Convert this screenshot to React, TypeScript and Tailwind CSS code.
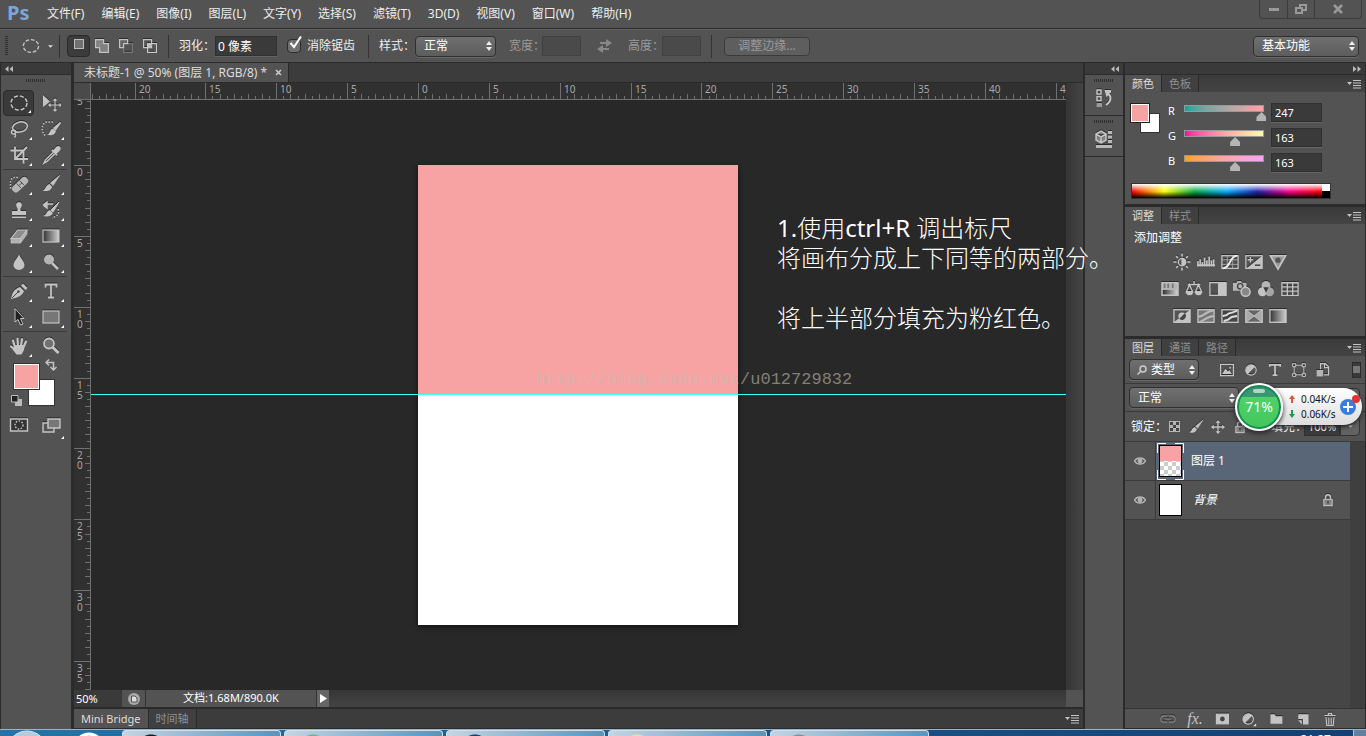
import type { ReactNode } from 'react'

const MENUS = [
  '文件(F)',
  '编辑(E)',
  '图像(I)',
  '图层(L)',
  '文字(Y)',
  '选择(S)',
  '滤镜(T)',
  '3D(D)',
  '视图(V)',
  '窗口(W)',
  '帮助(H)',
]

// Ruler spacing at 50% zoom: half a centimetre per small tick.
const TICK = 7.087
const H_ORIGIN = 327
const V_ORIGIN = 65

interface IconProps {
  children: ReactNode
  size?: string
}

function Icon({ children, size = 'size-5' }: IconProps) {
  return (
    <svg
      className={`${size} shrink-0 drop-shadow-[0_-1px_0_#2c2c2c]`}
      viewBox="0 0 20 20"
      fill="none"
      stroke="#c4c4c4"
      strokeWidth="1.5"
      aria-hidden="true"
    >
      {children}
    </svg>
  )
}

const BRUSH = (
  <>
    <path d="M18.500 1.500 L9.500 9 L12 11.500 Z" fill="#c4c4c4" strokeWidth="0.800" />
    <path d="M8.500 10 L11 12.500 C10.500 16.500 6 18 1.500 16.500 C5 15.500 4.500 11 8.500 10 Z" fill="#c4c4c4" stroke="none" />
  </>
)

const MOVE_CROSS = (
  <path
    d="M10 0 L13.500 4 H11 V9 H16 V6.500 L20 10 L16 13.500 V11 H11 V16 H13.500 L10 20 L6.500 16 H9 V11 H4 V13.500 L0 10 L4 6.500 V9 H9 V4 H6.500 Z"
    fill="#c4c4c4"
    stroke="none"
  />
)

const LOCK = (
  <>
    <path d="M6.500 9 V6 A3.500 3.500 0 0 1 13.500 6 V9" strokeWidth="2" />
    <rect x="4" y="9" width="12" height="9" fill="#858585" strokeWidth="1.500" />
    <path d="M10 11.500 V15" stroke="#3a3a3a" strokeWidth="2" />
  </>
)

interface Tool {
  name: string
  art: ReactNode
  single?: boolean
}

const TOOL_GROUPS: Tool[][] = [
  [
    { name: '椭圆选框工具', art: <ellipse cx="10" cy="10" rx="8" ry="7" strokeDasharray="4 2" /> },
    {
      name: '移动工具',
      single: true,
      art: (
        <>
          <path d="M2 2 V14 L9 8.500 Z" fill="#c4c4c4" stroke="none" />
          <path d="M14 6 V18 M8 12 H20 M12.500 7.500 L14 6 L15.500 7.500 M12.500 16.500 L14 18 L15.500 16.500 M9.500 10.500 L8 12 L9.500 13.500 M18.500 10.500 L20 12 L18.500 13.500" strokeWidth="1.200" />
        </>
      ),
    },
    {
      name: '套索工具',
      art: (
        <>
          <ellipse cx="11" cy="8" rx="7.500" ry="5" transform="rotate(-14 11 8)" />
          <circle cx="4.500" cy="13" r="2" />
          <path d="M5 15 C7 15 7 17 5.500 18.500" />
        </>
      ),
    },
    {
      name: '快速选择工具',
      art: (
        <>
          <path d="M12 3 H5 C0 5 0 14 5 17" strokeDasharray="1.500 1.500" />
          <path d="M19.500 3.500 L13 9 L14.500 10.500 Z" fill="#c4c4c4" />
          <path d="M12 9.500 L15 12 C14 16 10 17 6 15.500 C9 15 8.500 10.500 12 9.500 Z" fill="#c4c4c4" stroke="none" />
        </>
      ),
    },
    { name: '裁剪工具', art: <path d="M6 1.500 V14 H19 M1.500 5.500 H14.500 V18.500 M7 13 L18 2" strokeWidth="1.800" /> },
    {
      name: '吸管工具',
      art: (
        <>
          <path d="M12 7.500 L4.500 15 L3 18 L6 16.500 L13.500 9" />
          <path d="M11 5 L16 10 M12.500 6.500 L16 2.500 C18 1 19.500 3 18 5 L14.500 8.500 Z" fill="#c4c4c4" strokeWidth="2" />
        </>
      ),
    },
  ],
  [
    {
      name: '污点修复画笔工具',
      art: (
        <>
          <path d="M9 3.500 C3 2 1 6 1.500 11 V16" strokeDasharray="1.500 1.500" />
          <rect x="1.500" y="7" width="19" height="7.500" rx="3.500" fill="#b5b5b5" stroke="none" transform="rotate(-43 11 10.500)" />
          <path d="M7.500 9.500 L12 14 M10.500 6.500 L15 11" stroke="#555" strokeWidth="1" />
          <path d="M10.500 10.500 H11.500 M12 9 H13" stroke="#444" />
        </>
      ),
    },
    { name: '画笔工具', art: BRUSH },
    {
      name: '仿制图章工具',
      art: (
        <path
          d="M10 2 A3 3 0 0 1 12.500 6.500 C11 9 11 10 12 11 H17 V15 H3 V11 H8 C9 10 9 9 7.500 6.500 A3 3 0 0 1 10 2 Z M3 16.500 H17 V18 H3 Z"
          fill="#c4c4c4"
          stroke="none"
        />
      ),
    },
    {
      name: '历史记录画笔工具',
      art: (
        <>
          <path d="M2 5 L6 2 V4 H12 M6 4 V8 L2 5" fill="#c4c4c4" />
          <path d="M18 2 L10 10 L12 12 Z" fill="#c4c4c4" strokeWidth="1" />
          <path d="M9 10 L12 13 C10 16.500 6 17 2 16 C6 15 5 11 9 10 Z" fill="#c4c4c4" stroke="none" />
          <path d="M17 9 C19 13 16 17 11 17.500" strokeDasharray="1.500 1.500" />
        </>
      ),
    },
    {
      name: '橡皮擦工具',
      art: (
        <>
          <path d="M8.500 4 H18 L11.500 12.500 H2 Z" fill="#8d8d8d" strokeWidth="1.200" />
          <path d="M2 12.500 H11.500 V17 H2 Z M11.500 12.500 L18 4 V8 L11.500 17 Z" fill="#b0b0b0" strokeWidth="0.800" />
        </>
      ),
    },
    {
      name: '渐变工具',
      art: (
        <>
          <defs>
            <linearGradient id="tool-gradient">
              <stop stopColor="#333" />
              <stop offset="1" stopColor="#d0d0d0" />
            </linearGradient>
          </defs>
          <rect x="2" y="4" width="16" height="12" fill="url(#tool-gradient)" strokeWidth="1.200" />
        </>
      ),
    },
    { name: '模糊工具', art: <path d="M10 2 C11 6 15.500 9 15.500 13 A5.500 5 0 0 1 4.500 13 C4.500 9 9 6 10 2 Z" fill="#c4c4c4" stroke="none" /> },
    {
      name: '减淡工具',
      art: (
        <>
          <circle cx="8" cy="7.500" r="5" fill="#b5b5b5" stroke="none" />
          <path d="M11 11 L17 17" strokeWidth="2.500" />
        </>
      ),
    },
  ],
  [
    {
      name: '钢笔工具',
      art: (
        <>
          <path d="M2 18 C3 12 5 8 11 6 L15 10 C13 15 8 17 2 18 Z" fill="#c4c4c4" stroke="none" />
          <path d="M12 4.500 L14 2.500 L18.500 7 L16.500 9 Z" fill="#c4c4c4" stroke="none" />
          <path d="M3 17 L9 11" stroke="#444" strokeWidth="1" />
          <circle cx="9.500" cy="10.500" r="1.200" fill="#444" stroke="none" />
        </>
      ),
    },
    { name: '横排文字工具', art: <path d="M4.500 6.500 V3.500 H15.500 V6.500 M10 3.500 V16.500 M7 16.500 H13" strokeWidth="1.800" /> },
    {
      name: '路径选择工具',
      art: <path d="M6 1.500 V15 L9 12.500 L11.500 18 L14 17 L11.500 11.500 H15 Z" fill="#222" strokeWidth="1" />,
    },
    { name: '矩形工具', art: <rect x="2" y="4" width="16" height="12" fill="#777" strokeWidth="1.200" /> },
  ],
  [
    {
      name: '抓手工具',
      art: (
        <>
          <path d="M6 11 L4 4.500 M9 10 L8.500 2.500 M12 10 L13 3 M14.500 11 L17 5.500 M6 14 L2 10.500" strokeWidth="2.200" strokeLinecap="round" />
          <path d="M5 9 H15.500 L15 14 L12.500 18.500 H7.500 L4 14 Z" fill="#c4c4c4" stroke="none" />
        </>
      ),
    },
    {
      name: '缩放工具',
      single: true,
      art: (
        <>
          <circle cx="8" cy="7.500" r="5" fill="#707070" strokeWidth="1.800" />
          <path d="M11.500 11 L17.500 17" strokeWidth="3" />
        </>
      ),
    },
  ],
]

const ADJUSTMENTS: { name: string; art: ReactNode }[][] = [
  [
    {
      name: '亮度/对比度',
      art: (
        <>
          <circle cx="10" cy="10" r="4" />
          <path d="M10 6 A4 4 0 0 1 10 14 Z" fill="#c4c4c4" />
          <path d="M10 0.500 V4 M10 16 V19.500 M0.500 10 H4 M16 10 H19.500 M3.500 3.500 L5.500 5.500 M14.500 14.500 L16.500 16.500 M3.500 16.500 L5.500 14.500 M14.500 5.500 L16.500 3.500" strokeWidth="1.800" />
        </>
      ),
    },
    { name: '色阶', art: <path d="M1 15 V9 M3.500 15 V7 M6 15 V10 M8.500 15 V5 M11 15 V8 M13.500 15 V4 M16 15 V8 M18.500 15 V7 M0 13.500 H20" strokeWidth="1.800" /> },
    {
      name: '曲线',
      art: (
        <>
          <rect x="1" y="3" width="18" height="14" />
          <path d="M7 3 V17 M13 3 V17 M1 7.500 H19 M1 12.500 H19" strokeWidth="0.800" />
          <path d="M2 17 C12 16 8 4 18 3" stroke="#eee" strokeWidth="2" />
        </>
      ),
    },
    {
      name: '曝光度',
      art: (
        <>
          <rect x="1" y="3" width="18" height="14" />
          <path d="M19 3 V17 H2 Z" fill="#c4c4c4" stroke="none" />
          <path d="M3 7.500 H9 M6 4.500 V10.500" />
          <path d="M11 13.500 H17" stroke="#333" />
        </>
      ),
    },
    {
      name: '自然饱和度',
      art: (
        <>
          <path d="M1.500 3 H18.500 L10 18 Z" fill="#999" strokeWidth="1.800" />
          <circle cx="10" cy="8" r="3" fill="#555" stroke="none" />
        </>
      ),
    },
  ],
  [
    {
      name: '色相/饱和度',
      art: (
        <>
          <rect x="1" y="3" width="18" height="14" fill="#b5b5b5" />
          <path d="M4 4 V9 M8 4 V9 M13 4 V9" stroke="#777" strokeWidth="2" />
          <rect x="2" y="11" width="16" height="5" fill="url(#tool-gradient)" stroke="none" />
        </>
      ),
    },
    {
      name: '色彩平衡',
      art: (
        <>
          <path d="M10 1 V5 M3 5 H17 M5 5 L1.500 13 H8.500 Z M15 5 L11.500 13 H18.500 Z" />
          <path d="M1 13 H9 A4 4 0 0 1 1 13 M11 13 H19 A4 4 0 0 1 11 13" fill="#c4c4c4" stroke="none" />
        </>
      ),
    },
    {
      name: '黑白',
      art: (
        <>
          <rect x="1" y="3" width="18" height="14" />
          <rect x="10" y="3" width="9" height="14" fill="#c4c4c4" stroke="none" />
        </>
      ),
    },
    {
      name: '照片滤镜',
      art: (
        <>
          <path d="M0 3 H4 L5 1 H9 L10 3 H15 V12 H0 Z" fill="#b5b5b5" stroke="none" />
          <circle cx="8" cy="7" r="3" stroke="#444" />
          <circle cx="14" cy="13" r="5" fill="#888" strokeWidth="1.800" />
        </>
      ),
    },
    {
      name: '通道混合器',
      art: (
        <>
          <circle cx="10" cy="6" r="5" fill="#b5b5b5" stroke="none" />
          <circle cx="6" cy="13" r="5" fill="#c4c4c4" stroke="none" />
          <circle cx="14" cy="13" r="5" fill="#a5a5a5" stroke="none" />
          <path d="M7 8 H13 L10 14 Z" fill="#3a3a3a" stroke="none" />
        </>
      ),
    },
    { name: '颜色查找', art: <path d="M1 3 H19 V17 H1 Z M7 3 V17 M13 3 V17 M1 7.700 H19 M1 12.300 H19" /> },
  ],
  [
    {
      name: '反相',
      art: (
        <>
          <rect x="1" y="3" width="18" height="14" fill="#555" />
          <path d="M19 3 V17 H1 Z" fill="#c4c4c4" stroke="none" />
          <circle cx="10" cy="10" r="4" fill="#c4c4c4" stroke="none" />
          <path d="M13 7 A4.200 4.200 0 0 1 7 13 Z" fill="#444" stroke="none" />
        </>
      ),
    },
    {
      name: '色调分离',
      art: (
        <>
          <rect x="1" y="3" width="18" height="14" fill="#777" />
          <path d="M1 11 C8 11 10 4 18 4 M3 17 C9 14 12 10 19 10" stroke="#b8b8b8" strokeWidth="2.500" />
        </>
      ),
    },
    {
      name: '阈值',
      art: (
        <>
          <rect x="1" y="3" width="18" height="14" fill="#444" />
          <path d="M2 10 L6 9 L9 7 L13 6 L18 4 M3 15.500 L8 14 L12 11 L18 10" stroke="#ddd" strokeWidth="2.200" />
        </>
      ),
    },
    {
      name: '可选颜色',
      art: (
        <>
          <rect x="1" y="3" width="18" height="14" fill="#666" />
          <path d="M1 3 L10 10 L1 17 Z M19 3 L10 10 L19 17 Z" fill="#aaa" strokeWidth="1" />
        </>
      ),
    },
    {
      name: '渐变映射',
      art: <rect x="1" y="3" width="18" height="14" fill="url(#tool-gradient)" />,
    },
  ],
]

function Grip() {
  return (
    <div className="mx-auto h-[3px] w-5 shrink-0 bg-[repeating-linear-gradient(90deg,#2e2e2e_0_1px,transparent_1px_2px)]" />
  )
}

function Divider() {
  return <div className="h-[23px] w-px shrink-0 bg-[#333]" />
}

function DropDown({ label, value, className, padding = 'pl-2' }: { label: string; value: string; className: string; padding?: string }) {
  return (
    <div className={`relative shrink-0 ${className}`}>
      <select
        aria-label={label}
        className={`h-full w-full appearance-none rounded-sm border border-[#303030] bg-linear-to-b from-[#707070] to-[#5c5c5c] text-xs leading-4 text-white shadow-[0_1px_0_#686868] ${padding}`}
      >
        <option>{value}</option>
      </select>
      <svg className="pointer-events-none absolute top-1/2 right-1 h-2.5 w-1.5 -translate-y-1/2" viewBox="0 0 6 10" fill="#eee" aria-hidden="true">
        <path d="M0 4 L3 0 L6 4 Z M0 6 L3 10 L6 6 Z" />
      </svg>
    </div>
  )
}

function Tab({ children, active = false }: { children: ReactNode; active?: boolean }) {
  return (
    <button
      role="tab"
      aria-selected={active}
      className={
        active
          ? 'border-r border-[#2a2a2a] bg-[#535353] px-[7px] text-[#ddd]'
          : 'border-r border-[#2a2a2a] bg-[#404040] px-[7px] text-[#8f8f8f]'
      }
    >
      {children}
    </button>
  )
}

function PanelMenu() {
  return (
    <button aria-label="面板菜单" className="mr-1 ml-auto">
      <svg className="h-2.5 w-3.5" viewBox="0 0 14 10" fill="#c4c4c4" aria-hidden="true">
        <path d="M0 3 H5 L2.500 6 Z M6 1 H14 V2 H6 Z M6 3.500 H14 V4.500 H6 Z M6 6 H14 V7 H6 Z M6 8.500 H14 V9.500 H6 Z" />
      </svg>
    </button>
  )
}

function PanelTabs({ tabs }: { tabs: string[] }) {
  return (
    <div role="tablist" className="flex h-[17px] shrink-0 bg-linear-to-b from-[#3a3a3a] to-[#444] text-[11px] leading-[17px]">
      {tabs.map((t, i) => (
        <Tab key={t} active={i === 0}>
          {t}
        </Tab>
      ))}
      <PanelMenu />
    </div>
  )
}

function Collapse({ flip = false }: { flip?: boolean }) {
  return (
    <svg className={flip ? 'h-1.5 w-2 rotate-180' : 'h-1.5 w-2'} viewBox="0 0 8 6" fill="#bbb" aria-hidden="true">
      <path d="M3.500 0 V6 L0 3 Z M8 0 V6 L4.500 3 Z" />
    </svg>
  )
}

function MenuBar() {
  return (
    <header className="flex h-[29px] shrink-0 items-start border-b border-[#2b2b2b] bg-[#535353]">
      <span className="w-[39px] shrink-0 pl-[7px] text-xl leading-[26px] font-bold text-[#7aa7d8]">Ps</span>
      <nav className="flex gap-px text-xs leading-7 text-[#eee]">
        {MENUS.map((m) => (
          <button key={m} className="px-2 whitespace-nowrap">
            {m}
          </button>
        ))}
      </nav>
      <div className="mr-1 ml-auto flex h-[19px] rounded-b-sm border border-t-0 border-[#3b3b3b]">
        <button aria-label="最小化" className="grid w-[27px] place-items-center">
          <span className="h-[3px] w-2.5 bg-[#999]" />
        </button>
        <button aria-label="还原" className="grid w-7 place-items-center border-x border-[#3b3b3b]">
          <svg className="h-2.5 w-3" viewBox="0 0 12 10" fill="none" stroke="#999" strokeWidth="2" aria-hidden="true">
            <path d="M5 4 V1 H11 V6 H8 M1 4 H7 V9 H1 Z" />
          </svg>
        </button>
        <button aria-label="关闭" className="grid w-[46px] place-items-center">
          <svg className="h-2.5 w-2.5" viewBox="0 0 10 10" stroke="#999" strokeWidth="2.500" aria-hidden="true">
            <path d="M1 1 L9 9 M9 1 L1 9" />
          </svg>
        </button>
      </div>
    </header>
  )
}

function OptionsBar() {
  return (
    <div className="flex h-[34px] shrink-0 items-center border-t border-b border-t-[#606060] border-b-[#2b2b2b] bg-[#535353] pl-[5px] text-xs leading-4 text-[#eee]">
      <div className="h-5 w-[3px] bg-[repeating-linear-gradient(#2e2e2e_0_1px,transparent_1px_2px)]" />
      <button aria-label="工具预设" className="mr-1.5 ml-3.5 flex items-center gap-2">
        <svg className="size-[18px]" viewBox="0 0 20 20" fill="none" stroke="#c4c4c4" strokeWidth="1.500" aria-hidden="true">
          <ellipse cx="10" cy="10" rx="8.500" ry="7" strokeDasharray="4 2" />
        </svg>
        <svg className="h-[3px] w-[5px]" viewBox="0 0 6 3" fill="#ddd" aria-hidden="true">
          <path d="M0 0 H6 L3 3 Z" />
        </svg>
      </button>
      <Divider />
      <div className="mr-1.5 ml-[7px] flex items-center">
        <button aria-label="新选区" className="grid h-[22px] w-[23px] place-items-center rounded-sm border border-[#2a2a2a] bg-[#3c3c3c]">
          <span className="mb-1 size-2.5 border border-[#bbb] bg-[#707070]" />
        </button>
        <button aria-label="添加到选区" className="grid w-6 place-items-center">
          <Icon size="size-4"><path d="M2 2 H12 V7 H18 V18 H7 V12 H2 Z" fill="#808080" /><path d="M7 12 V7 H12" stroke="#999" strokeWidth="1" /></Icon>
        </button>
        <button aria-label="从选区减去" className="grid w-6 place-items-center">
          <Icon size="size-4"><path d="M12 7 H18 V18 H7 V12" stroke="#777" /><path d="M2 2 H12 V7 H7 V12 H2 Z" fill="#666" /></Icon>
        </button>
        <button aria-label="与选区交叉" className="grid w-6 place-items-center">
          <Icon size="size-4"><path d="M2 2 H12 V12 H2 Z M7 7 H18 V18 H7 Z" /><path d="M8 8 H11.500 V11.500 H8 Z" fill="#aaa" /></Icon>
        </button>
      </div>
      <Divider />
      <label className="mr-2.5 ml-2.5 flex items-center gap-1 whitespace-nowrap">
        <span className="w-8">羽化：</span>
        <input className="h-5 w-[62px] border border-[#303030] bg-[#3a3a3a] pl-0.5 text-white shadow-[0_1px_0_#646464]" defaultValue="0 像素" />
      </label>
      <label className="mr-[13px] flex items-center gap-1.5 whitespace-nowrap">
        <span className="relative size-[14px]">
          <input type="checkbox" defaultChecked className="block size-[14px] appearance-none rounded-sm border border-[#2c2c2c] bg-[#707070]" />
          <svg className="pointer-events-none absolute -top-1 left-0.5 size-[14px]" viewBox="0 0 14 14" fill="none" stroke="#fff" strokeWidth="2" aria-hidden="true">
            <path d="M1.500 8 L5 12 L12 1.500" />
          </svg>
        </span>
        消除锯齿
      </label>
      <Divider />
      <span className="ml-2.5 w-9 whitespace-nowrap">样式：</span>
      <DropDown label="样式" value="正常" className="h-[21px] w-[81px]" />
      <label className="ml-[13px] flex items-center whitespace-nowrap text-[#999]">
        <span className="w-[33px]">宽度：</span>
        <input disabled className="h-5 w-[39px] border border-[#404040] bg-[#4a4a4a]" />
      </label>
      <button aria-label="交换宽高" className="mx-4">
        <svg className="h-3.5 w-[15px]" viewBox="0 0 15 14" fill="#888" aria-hidden="true">
          <path d="M3 3 H9 V0 L15 4 L9 8 V5 H3 Z M12 9 H6 V6 L0 10 L6 14 V11 H12 Z" />
        </svg>
      </button>
      <label className="mr-2.5 flex items-center whitespace-nowrap text-[#999]">
        <span className="w-[34px]">高度：</span>
        <input disabled className="h-5 w-[39px] border border-[#404040] bg-[#4a4a4a]" />
      </label>
      <Divider />
      <button className="ml-3 h-[19px] w-[86px] rounded-sm border border-[#3b3b3b] bg-[#5e5e5e] text-[#999]">调整边缘...</button>
      <DropDown label="工作区" value="基本功能" className="mr-[7px] ml-auto h-[21px] w-[106px]" />
    </div>
  )
}

function ToolBox() {
  return (
    <aside className="flex w-[72px] shrink-0 flex-col border-x border-[#2b2b2b] bg-[#535353]">
      <div className="flex h-3 shrink-0 items-center border-b border-[#2b2b2b] bg-[#3a3a3a] pl-1">
        <Collapse />
      </div>
      <div className="flex flex-col pt-1">
        <Grip />
        <div className="h-2" />
        {TOOL_GROUPS.map((group, g) => (
          <div key={g} className={g ? 'mr-1 ml-0.5 grid grid-cols-2 border-t border-[#3a3a3a] py-px' : 'mr-1 ml-0.5 grid grid-cols-2 pb-px'}>
            {group.map((tool, i) => (
              <button
                key={tool.name}
                aria-label={tool.name}
                className={
                  g === 0 && i === 0
                    ? 'relative grid h-[26px] w-[31px] place-items-center rounded-sm border border-[#2b2b2b] bg-[#3a3a3a]'
                    : 'relative grid h-[26px] w-[31px] place-items-center'
                }
              >
                <Icon>{tool.art}</Icon>
                {!tool.single && (
                  <span className="absolute right-0.5 bottom-0.5 size-[3px] bg-white [clip-path:polygon(100%_0,100%_100%,0_100%)]" />
                )}
              </button>
            ))}
          </div>
        ))}
        {/* Foreground and background colour. */}
        <div className="relative mt-[3px] mb-1.5 ml-3 h-11 w-11">
          <button aria-label="背景色" className="absolute top-4 left-[15px] size-[27px] border border-[#333] bg-white" />
          <button aria-label="前景色" className="absolute top-0 left-0 size-[27px] border border-[#333] bg-[#f7a3a3] ring-1 ring-white ring-inset" />
          <svg className="absolute -top-1 left-8 size-3" viewBox="0 0 12 12" fill="none" stroke="#c4c4c4" strokeWidth="1.500" aria-hidden="true">
            <path d="M4 0.500 L1 3.500 L4 6.500 M1.500 3.500 H8.500 V10 M5.500 8 L8.500 11 L11.500 8" />
          </svg>
          <svg className="absolute top-8 -left-0.5 size-[11px]" viewBox="0 0 11 11" aria-hidden="true">
            <path d="M4 4 H11 V11 H4 Z" fill="#bbb" />
            <path d="M0.500 0.500 H7 V7 H0.500 Z" fill="#222" stroke="#bbb" />
          </svg>
        </div>
        <div className="mr-1 ml-0.5 grid grid-cols-2">
          <button aria-label="快速蒙版" className="grid h-6 w-[31px] place-items-center">
            <Icon>
              <rect x="1.500" y="4" width="17" height="12" fill="#333" />
              <circle cx="10" cy="10" r="4" strokeDasharray="1.500 1.500" />
            </Icon>
          </button>
          <button aria-label="屏幕模式" className="relative grid h-6 w-[31px] place-items-center">
            <Icon>
              <rect x="2" y="8" width="11" height="9" fill="#555" />
              <rect x="7" y="4" width="12" height="9" fill="#777" />
            </Icon>
            <span className="absolute right-0.5 -bottom-0.5 size-[3px] bg-white [clip-path:polygon(100%_0,100%_100%,0_100%)]" />
          </button>
        </div>
      </div>
    </aside>
  )
}

function HorizontalRuler() {
  const ticks = Array.from({ length: 140 }, (_, i) => i - 46)
  return (
    <svg className="h-[17px] w-full bg-[#303030] text-[10px]" fill="#a8a8a8" aria-hidden="true">
      <path
        d={ticks.map((t) => `M${Math.round(H_ORIGIN + t * TICK) + 0.5} ${t % 10 === 0 ? 0 : t % 2 === 0 ? 11 : 13} V17`).join(' ')}
        stroke="#707070"
      />
      <path d="M0 16.500 H4000" stroke="#707070" />
      {[-20, -15, -10, -5, 0, 5, 10, 15, 20, 25, 30, 35, 40, 45].map((n) => (
        <text key={n} x={Math.round(H_ORIGIN + n * 2 * TICK) + 4} y="10">
          {Math.abs(n)}
        </text>
      ))}
    </svg>
  )
}

function VerticalRuler() {
  const ticks = Array.from({ length: 90 }, (_, i) => i - 12)
  return (
    <svg className="h-full w-[17px] bg-[#303030] text-[10px]" fill="#a8a8a8" aria-hidden="true">
      <path
        d={ticks.map((t) => `M${t % 10 === 0 ? 0 : t % 2 === 0 ? 11 : 13} ${Math.round(V_ORIGIN + t * TICK) + 0.5} H17`).join(' ')}
        stroke="#707070"
      />
      <path d="M16.500 0 V4000" stroke="#707070" />
      {[-5, 0, 5, 10, 15, 20, 25, 30, 35].map((n) =>
        String(Math.abs(n))
          .split('')
          .map((digit, i) => (
            <text key={`${n}-${i}`} x="3" y={Math.round(V_ORIGIN + n * 2 * TICK) + 11 + i * 10}>
              {digit}
            </text>
          )),
      )}
    </svg>
  )
}

function DocumentWindow() {
  return (
    <main className="flex min-w-0 flex-1 flex-col">
      <div role="tablist" className="flex h-5 shrink-0 border-b border-[#2b2b2b] bg-[#3c3c3c]">
        <div className="flex items-center gap-2 border-r border-[#2b2b2b] bg-[#535353] pr-1.5 pl-2.5 text-xs leading-[19px] text-[#ddd]">
          <button role="tab" aria-selected="true" className="whitespace-nowrap">
            未标题-1 @ 50% (图层 1, RGB/8) *
          </button>
          <button aria-label="关闭文档">
            <svg className="size-[7px]" viewBox="0 0 7 7" stroke="#ccc" strokeWidth="1.500" aria-hidden="true">
              <path d="M1 1 L6 6 M6 1 L1 6" />
            </svg>
          </button>
        </div>
      </div>
      <div className="grid min-h-0 flex-1 grid-cols-[17px_1fr_17px] grid-rows-[17px_1fr]">
        <div className="border-r border-b border-[#707070] bg-[#4a4a4a]" />
        <HorizontalRuler />
        <div className="row-span-2 bg-linear-to-r from-[#353535] to-[#454545]" />
        <VerticalRuler />
        <div className="relative z-10 bg-[#282828]">
          <div className="absolute top-[65px] left-[327px] h-[460px] w-80 bg-white shadow-[0_2px_5px_#111]">
            <div className="h-1/2 bg-[#f7a3a3]" />
          </div>
          <div className="absolute inset-x-0 top-[294px] h-px bg-[#4ff]" />
          <span className="absolute top-[268px] left-[445px] text-[17px] leading-6 text-[#c0bfb0]/60 [font-family:'Liberation_Mono',monospace]">
            http://blog.csdn.net/u012729832
          </span>
          <p className="absolute top-[113px] left-[686px] text-2xl leading-[30px] font-light whitespace-pre text-white">
            <span className="font-normal">1.</span>使用<span className="font-normal">ctrl+R </span>
            {'调出标尺\n将画布分成上下同等的两部分。\n\n将上半部分填充为粉红色。'}
          </p>
        </div>
      </div>
      <div className="flex h-[17px] shrink-0 bg-linear-to-b from-[#363636] to-[#444] text-[11px] leading-4 text-white">
        <input aria-label="缩放" className="w-12 bg-[#3a3a3a] pl-0.5" defaultValue="50%" />
        <button aria-label="导出" className="grid w-6 place-items-center border-r border-[#333] bg-[#535353]">
          <svg className="size-3" viewBox="0 0 12 12" aria-hidden="true">
            <circle cx="6" cy="6" r="6" fill="#aaa" />
            <path d="M3.500 3 H7 L9 5 V9 H3.500 Z" fill="#ddd" stroke="#555" />
          </svg>
        </button>
        <div className="w-[171px] border-r border-[#333] bg-[#535353] text-center">文档:1.68M/890.0K</div>
        <button aria-label="状态栏选项" className="grid w-3 place-items-center bg-[#666]">
          <svg className="h-[9px] w-[7px]" viewBox="0 0 7 9" fill="#fff" aria-hidden="true">
            <path d="M0 0 L7 4.500 L0 9 Z" />
          </svg>
        </button>
        <div className="ml-auto w-[17px] bg-[#535353]" />
      </div>
      <div role="tablist" className="mt-0.5 flex h-5 shrink-0 border-b border-[#2b2b2b] bg-[#3c3c3c] text-[11px] leading-[18px]">
        <Tab active>Mini Bridge</Tab>
        <Tab>时间轴</Tab>
        <PanelMenu />
      </div>
    </main>
  )
}

function Dock() {
  return (
    <aside className="flex w-[38px] shrink-0 flex-col bg-[#535353]">
      <div className="flex h-3 shrink-0 items-center justify-end border-b border-[#2b2b2b] bg-[#3a3a3a] pr-1">
        <Collapse />
      </div>
      <div className="flex h-[41px] flex-col border-b border-[#2b2b2b] pt-1">
        <Grip />
        <button aria-label="历史记录" className="mx-auto mt-1.5">
          <Icon>
            <path d="M3 2 H7 V6 H3 Z M3 8.500 H7 V12.500 H3 Z" />
            <path d="M2.500 15 H8 V19 H2.500 Z" fill="#999" stroke="none" />
            <path d="M12 6 C18 6 18 13 12 17" strokeWidth="2" />
            <path d="M10.500 2 H17 V4 L12.500 9 Z" fill="#c4c4c4" stroke="none" />
          </Icon>
        </button>
      </div>
      <div className="flex h-[41px] flex-col border-b border-[#2b2b2b] pt-1">
        <Grip />
        <button aria-label="属性" className="mx-auto mt-1.5">
          <Icon>
            <path d="M2 5 L7 2 L12 5 V11 L7 14 L2 11 Z M2 5 L7 8 L12 5 M7 8 V14" fill="#808080" />
            <path d="M14 2 H18 V5 H14 Z M14 6.500 H18 V9.500 H14 Z M14 11 H18 V14 H14 Z M2 16 H18 V19 H2 Z" fill="#b8b8b8" stroke="none" />
          </Icon>
        </button>
      </div>
    </aside>
  )
}

const CHANNELS = [
  { name: 'R', value: 247, track: 'bg-linear-to-r from-[#00a3a3] to-[#ffa3a3]' },
  { name: 'G', value: 163, track: 'bg-linear-to-r from-[#f700a3] to-[#f7ffa3]' },
  { name: 'B', value: 163, track: 'bg-linear-to-r from-[#f7a300] to-[#f7a3ff]' },
]

function ColorPanel() {
  return (
    <section className="h-[130px] shrink-0 border-b border-[#2b2b2b] bg-[#535353]">
      <PanelTabs tabs={['颜色', '色板']} />
      <div className="flex px-[5px] pt-[11px]">
        <div className="relative h-[30px] w-[38px]">
          <button aria-label="设置背景色" className="absolute top-2.5 left-2.5 size-5 border border-[#333] bg-white" />
          <button aria-label="设置前景色" className="absolute top-0 left-0 size-5 border border-[#222] bg-[#f7a3a3] ring-1 ring-white ring-inset" />
        </div>
        <div className="text-[11px] text-white">
          {CHANNELS.map((c) => (
            <div key={c.name} className="flex h-[25px] items-start">
              <label htmlFor={`channel-${c.name}`} className="w-[11px] leading-4">
                {c.name}
              </label>
              <div className="w-[90px] pt-0.5">
                <div className={`mx-[5px] h-[7px] border border-[#999] ${c.track}`} />
                <input
                  id={`channel-${c.name}`}
                  type="range"
                  min="0"
                  max="255"
                  defaultValue={c.value}
                  className="block h-[9px] w-full appearance-none bg-transparent [&::-webkit-slider-thumb]:h-[9px] [&::-webkit-slider-thumb]:w-2.5 [&::-webkit-slider-thumb]:appearance-none [&::-webkit-slider-thumb]:bg-[#b5b5b5] [&::-webkit-slider-thumb]:[clip-path:polygon(50%_0,100%_55%,100%_100%,0_100%,0_55%)]"
                />
              </div>
              <input
                aria-label={`${c.name} 数值`}
                className="ml-0.5 h-[19px] w-[51px] border border-[#303030] bg-[#3a3a3a] pl-[3px] leading-4 shadow-[0_1px_0_#646464]"
                defaultValue={c.value}
              />
            </div>
          ))}
        </div>
      </div>
      <div className="mt-[5px] ml-1.5 flex h-4 w-[200px] border border-[#333]">
        <div className="flex-1 bg-[linear-gradient(#fff_0%,transparent_55%,#000_100%),linear-gradient(90deg,#f00,#ff0_17%,#0a4_33%,#0af_50%,#22a_66%,#f08_83%,#f00)]" />
        <div className="w-2">
          <div className="h-1/2 bg-white" />
          <div className="h-1/2 bg-black" />
        </div>
      </div>
    </section>
  )
}

function AdjustmentsPanel() {
  return (
    <section className="mt-0.5 h-[130px] shrink-0 border-b border-[#2b2b2b] bg-[#535353]">
      <PanelTabs tabs={['调整', '样式']} />
      <h2 className="pt-1 pl-[9px] text-xs leading-5 text-white">添加调整</h2>
      <div className="ml-[33px] flex w-36 flex-col">
        {ADJUSTMENTS.map((row, i) => (
          <div key={i} className="flex h-[27px] justify-center">
            {row.map((a) => (
              <button key={a.name} aria-label={a.name} title={a.name} className="grid w-6 place-items-center">
                <Icon size="size-[18px]">{a.art}</Icon>
              </button>
            ))}
          </div>
        ))}
      </div>
    </section>
  )
}

const CHECKER = 'bg-[repeating-conic-gradient(#ccc_0_25%,#fff_0_50%)] bg-[length:8px_8px]'

function LayerRow({ name, active = false, locked = false }: { name: string; active?: boolean; locked?: boolean }) {
  return (
    <li className="flex h-[39px] items-stretch border-b border-[#3a3a3a] bg-[#535353]">
      <button aria-label="切换可见性" className="grid w-[31px] place-items-center border-r border-[#3a3a3a]">
        <svg className="h-2.5 w-3" viewBox="0 0 12 10" fill="none" stroke="#b5b5b5" aria-hidden="true">
          <path d="M0.500 5 C3 1 9 1 11.500 5 C9 9 3 9 0.500 5 Z" strokeWidth="1.300" />
          <circle cx="6" cy="5" r="2" fill="#b5b5b5" />
        </svg>
      </button>
      <button className={active ? 'flex flex-1 items-center bg-[#596678] pl-px' : 'flex flex-1 items-center pl-px'}>
        <span className="relative grid h-[37px] w-[27px] place-items-center">
          {active && (
            <svg className="absolute inset-0 h-full w-full" viewBox="0 0 27 37" fill="none" stroke="#fff" aria-hidden="true">
              <path d="M0.500 10 V0.500 H9 M18 0.500 H26.500 V10 M26.500 27 V36.500 H18 M9 36.500 H0.500 V27" />
            </svg>
          )}
          {active ? (
            <span className={`h-8 w-[23px] border border-black ${CHECKER}`}>
              <span className="block h-1/2 bg-[#f7a3a3]" />
            </span>
          ) : (
            <span className="h-8 w-[23px] border border-black bg-white" />
          )}
        </span>
        <span className={active ? 'ml-[7px] text-xs text-white' : 'ml-[9px] text-xs text-white italic'}>{name}</span>
        {locked && (
          <span className="mr-[15px] ml-auto">
            <Icon size="size-[14px]">{LOCK}</Icon>
          </span>
        )}
      </button>
    </li>
  )
}

function ValueField({ label }: { label: string }) {
  return (
    <label className="ml-auto flex items-center whitespace-nowrap">
      <span className="w-[33px] overflow-hidden">{label}</span>
      <input className="h-[19px] w-9 border border-[#303030] bg-[#3a3a3a] pl-[3px] text-[11px]" defaultValue="100%" />
      <span className="grid h-[19px] w-5 place-items-center rounded-r-sm border border-[#333] bg-[#626262]">
        <svg className="h-[3px] w-[5px]" viewBox="0 0 6 3" fill="#ddd" aria-hidden="true">
          <path d="M0 0 H6 L3 3 Z" />
        </svg>
      </span>
    </label>
  )
}

function LayersPanel() {
  return (
    <section className="relative mt-0.5 flex min-h-0 flex-1 flex-col border-b border-[#2b2b2b] bg-[#535353] text-xs text-white">
      <PanelTabs tabs={['图层', '通道', '路径']} />
      <div className="flex h-7 shrink-0 items-center border-b border-[#3a3a3a] pl-1">
        <div className="relative">
          <DropDown label="滤镜类型" value="类型" className="h-[21px] w-[70px]" padding="pl-[21px]" />
          <svg className="pointer-events-none absolute top-1.5 left-2 size-2.5" viewBox="0 0 10 10" fill="none" stroke="#ccc" strokeWidth="1.500" aria-hidden="true">
            <circle cx="6" cy="4" r="3" />
            <path d="M4 6 L0.500 9.500" />
          </svg>
        </div>
        <div className="ml-4 flex">
          <button aria-label="像素图层" className="grid w-6 place-items-center">
            <Icon size="size-4"><path d="M2 3 H18 V17 H2 Z" /><path d="M4 15 L8 8 L11 12 L13 10 L16 15 Z M13 6 H15 V8 H13 Z" fill="#c4c4c4" stroke="none" /></Icon>
          </button>
          <button aria-label="调整图层" className="grid w-6 place-items-center">
            <Icon size="size-4"><circle cx="10" cy="10" r="6.500" /><path d="M14.500 5.500 A6.500 6.500 0 0 0 5.500 14.500 Z" fill="#c4c4c4" /></Icon>
          </button>
          <button aria-label="文字图层" className="grid w-6 place-items-center">
            <Icon size="size-4"><path d="M3.500 6 V3.500 H16.500 V6 M10 3 V17 M7 16.500 H13" strokeWidth="2.200" /></Icon>
          </button>
          <button aria-label="形状图层" className="grid w-6 place-items-center">
            <Icon size="size-4"><path d="M5 4 H15 M5 16 H15 M4 5 V15 M16 5 V15 M2 2 H6 V6 H2 Z M14 2 H18 V6 H14 Z M2 14 H6 V18 H2 Z M14 14 H18 V18 H14 Z" strokeWidth="1.200" /></Icon>
          </button>
          <button aria-label="智能对象" className="grid w-6 place-items-center">
            <Icon size="size-4"><path d="M7 9 V2 H13 L17 6 V16 H11 M12 2 V7 H17" /><path d="M2 10 H10 V18 H2 Z" fill="#b5b5b5" stroke="none" /></Icon>
          </button>
        </div>
        <button aria-label="图层过滤开关" className="mr-1 ml-auto h-4 w-[9px] border border-[#2c2c2c] bg-[#3a3a3a]">
          <span className="block h-1/2 bg-[#777]" />
        </button>
      </div>
      <div className="flex h-7 shrink-0 items-center border-b border-[#3a3a3a] pr-[5px] pl-1">
        <DropDown label="混合模式" value="正常" className="h-[21px] w-[110px]" />
        <ValueField label="不透明度：" />
      </div>
      <div className="flex h-[30px] shrink-0 items-center border-b border-[#3a3a3a] pr-[5px] pl-1.5">
        <span className="w-8 whitespace-nowrap">锁定：</span>
        <div className="flex">
          <button aria-label="锁定透明像素" className="grid w-[22px] place-items-center">
            <span className="size-[11px] border border-[#b5b5b5] bg-[repeating-conic-gradient(#b5b5b5_0_25%,#444_0_50%)] bg-[length:6px_6px]" />
          </button>
          <button aria-label="锁定图像像素" className="grid w-[22px] place-items-center"><Icon size="size-4">{BRUSH}</Icon></button>
          <button aria-label="锁定位置" className="grid w-[22px] place-items-center"><Icon size="size-[14px]">{MOVE_CROSS}</Icon></button>
          <button aria-label="锁定全部" className="grid w-[22px] place-items-center"><Icon size="size-[14px]">{LOCK}</Icon></button>
        </div>
        <ValueField label="填充：" />
      </div>
      <div className="flex min-h-0 flex-1 bg-[#464646]">
        <ul className="flex-1">
          <LayerRow name="图层 1" active />
          <LayerRow name="背景" locked />
        </ul>
        <div className="w-[15px] bg-[#3f3f3f]" />
      </div>
      <div className="flex h-5 shrink-0 items-center justify-end gap-[11px] border-t border-[#333] pr-[27px]">
        <button aria-label="链接图层"><Icon size="size-4"><path d="M9 6 H5 A4 4 0 0 0 5 14 H9 M11 6 H15 A4 4 0 0 1 15 14 H11 M6 10 H14" stroke="#888" /></Icon></button>
        <button aria-label="图层样式" className="w-4 text-base leading-4 text-[#c4c4c4] italic [font-family:'Liberation_Serif',serif]">fx.</button>
        <button aria-label="添加蒙版"><Icon size="size-4"><rect x="3" y="4" width="15" height="12" fill="#c4c4c4" /><circle cx="10.500" cy="10" r="3" fill="#444" stroke="none" /></Icon></button>
        <button aria-label="新建调整图层"><Icon size="size-4"><circle cx="9" cy="10" r="6.500" /><path d="M13.500 5.500 A6.500 6.500 0 0 0 4.500 14.500 Z" fill="#c4c4c4" /><path d="M19 15 V19 H15 Z" fill="#ddd" stroke="none" /></Icon></button>
        <button aria-label="新建组"><Icon size="size-4"><path d="M3 4 H8 L10 6.500 H18 V16 H3 Z" fill="#c4c4c4" stroke="none" /></Icon></button>
        <button aria-label="新建图层"><Icon size="size-4"><path d="M4 4 H17 V17 H10 V10 H4 Z M4 11.500 H8.500 V17 Z" fill="#c4c4c4" stroke="none" /></Icon></button>
        <button aria-label="删除图层"><Icon size="size-4"><path d="M3 5.500 H17 M8 5 V3 H12 V5 M5 7.500 L6 18 H14 L15 7.500 M8.500 8 V17 M11.500 8 V17" /></Icon></button>
      </div>
      <SpeedWidget />
    </section>
  )
}

/* Floating memory and network meter. */
function SpeedWidget() {
  return (
    <div className="absolute top-[43px] right-[3px] flex h-[49px] w-[127px] items-center">
      <div className="absolute right-0 h-[37px] w-[110px] rounded-full bg-linear-to-b from-white to-[#ddd] shadow-[0_2px_4px_#222]" />
      <div className="relative grid size-12 shrink-0 place-items-center rounded-full border-2 border-white bg-[linear-gradient(#3a9575_0_26%,#4fd367_28%,#42c65c)] text-sm leading-4 text-white shadow-[0_2px_5px_#222] ring-2 ring-[#168b52] ring-inset">
        71%
        <span className="absolute top-1 h-1 w-3 rounded-full bg-white/60" />
      </div>
      <div className="relative ml-1.5 flex flex-col gap-0.5 text-[10px] leading-[13px] text-[#111]">
        <div className="flex items-center gap-1.5">
          <svg className="h-2 w-1.5" viewBox="0 0 6 8" fill="#e85238" aria-hidden="true"><path d="M3 0 L6 4 H4 V8 H2 V4 H0 Z" /></svg>
          0.04K/s
        </div>
        <div className="flex items-center gap-1.5">
          <svg className="h-2 w-1.5" viewBox="0 0 6 8" fill="#1a9a50" aria-hidden="true"><path d="M3 8 L6 4 H4 V0 H2 V4 H0 Z" /></svg>
          0.06K/s
        </div>
      </div>
      <button aria-label="加速" className="absolute right-1.5 grid size-4 place-items-center rounded-full bg-[#357fe0]">
        <svg className="size-2.5" viewBox="0 0 10 10" stroke="#fff" strokeWidth="2" aria-hidden="true"><path d="M5 0 V10 M0 5 H10" /></svg>
        <span className="absolute -top-1 -right-1 size-2 rounded-full bg-[#e03232]" />
      </button>
    </div>
  )
}

function TaskBar() {
  return (
    <footer className="flex h-[7px] shrink-0 overflow-hidden border-t border-[#9ab4cc] bg-linear-to-r from-[#2274a8] to-[#153f73]">
      <svg className="h-1.5 w-[122px] shrink-0" viewBox="0 0 122 6" aria-hidden="true">
        <circle cx="27" cy="21" r="20" fill="#b4cbd9" stroke="#d7e5ee" />
        <circle cx="89" cy="18" r="14" fill="#82cef0" stroke="#fff" strokeWidth="3" />
      </svg>
      <div className="flex gap-[3px]">
        {['#1d1715', '#72bd50', '#173c8c', '#f0df8d', '#879297'].map((c) => (
          <button key={c} aria-label="任务栏窗口" className="flex w-[159px] rounded-t-sm border border-b-0 border-[#cfdfeb] bg-linear-to-r from-[#c5d5e3] to-[#5a93b8] pl-5">
            <svg className="mt-0.5 h-1.5 w-4" viewBox="0 0 16 6" aria-hidden="true"><path d="M0 6 C0 0 16 0 16 6 Z" fill={c} /></svg>
          </button>
        ))}
      </div>
      <span className="mr-[22px] ml-auto pt-0.5 text-xs leading-4 text-white">21:27</span>
      <span className="w-[13px] border-l border-[#b5c6d6] bg-[#6480a0]" />
    </footer>
  )
}

export default function App() {
  return (
    <div className="flex h-screen flex-col overflow-hidden bg-[#2b2b2b] [font-family:'Noto_Sans','Noto_Sans_CJK_SC',sans-serif]">
      <MenuBar />
      <OptionsBar />
      <div className="flex min-h-0 flex-1 gap-0.5">
        <ToolBox />
        <DocumentWindow />
        <Dock />
        <aside className="flex w-[241px] shrink-0 flex-col border-r border-[#2b2b2b]">
          <div className="flex h-3 shrink-0 items-center justify-end border-b border-[#2b2b2b] bg-[#3a3a3a] pr-1">
            <Collapse flip />
          </div>
          <ColorPanel />
          <AdjustmentsPanel />
          <LayersPanel />
        </aside>
      </div>
      <TaskBar />
    </div>
  )
}
